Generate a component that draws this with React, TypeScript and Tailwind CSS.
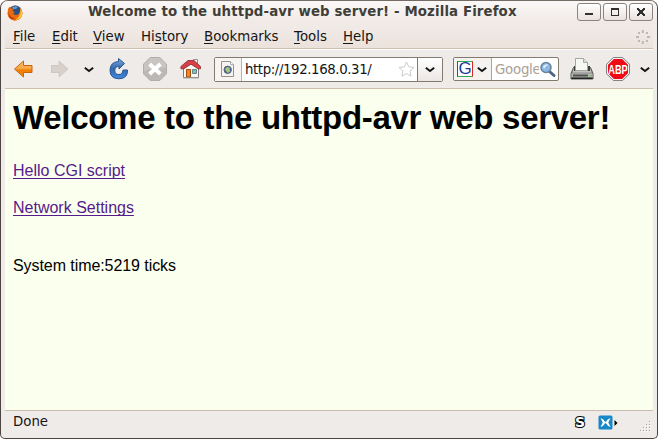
import React from "react";

const ui = "font-['DejaVu_Sans',sans-serif]";

function Chevron({ className = "" }: { className?: string }) {
  return (
    <svg className={"shrink-0 " + className} width="10" height="7" viewBox="0 0 10 7" fill="none">
      <path d="M.8 1.8 5 5 9.2 1.8" stroke="#161616" strokeWidth="2" />
    </svg>
  );
}

function FirefoxLogo() {
  return (
    <svg className="ml-[6px] mt-[4px] shrink-0" width="16" height="16" viewBox="0 0 16 16">
      <circle cx="8" cy="8" r="7.4" fill="#e8630a" />
      <circle cx="8.4" cy="6.4" r="5.8" fill="#284f86" />
      <path d="M5 2.6Q8 0 11 2L9 4 6 4z" fill="#5b9bd2" />
      <path d="M1 4 2.5 1.8 4 3.6 6.5 4 5.6 6 8 7.2 6 8.6Q8 11 11.5 9.2L13.5 5.5 12.7 2.5Q16.4 6 15 10.6 13 15.5 8 15.5 2 15 .6 9.5Z" fill="#e96a10" />
      <path d="M13.3 3.5Q16 7 14.6 10.8 13 14.5 8.5 15 12.5 12 13.4 8z" fill="#ffcf32" />
      <path d="M1.3 7Q3 13 8 13.5 5 15 2.3 12z" fill="#b92b0d" />
    </svg>
  );
}

function WindowButton({ children }: { children: React.ReactNode }) {
  return (
    <div className="h-[18px] w-6 shrink-0 rounded-[3px] border border-[#8c837d] bg-linear-to-b from-[#fff] to-[#e9e2df]">
      <svg width="22" height="16" viewBox="0 0 22 16" shapeRendering="crispEdges">{children}</svg>
    </div>
  );
}

function MenuItem({ before = "", hot, after, className }: { before?: string; hot: string; after: string; className: string }) {
  return (
    <span className={"shrink-0 whitespace-nowrap " + className}>
      {before}
      <span className="underline decoration-1 underline-offset-[2px] [text-decoration-skip-ink:none]">{hot}</span>
      {after}
    </span>
  );
}

function Throbber() {
  return (
    <svg className="ml-auto mr-[2px] mt-[5px]" width="16" height="16" viewBox="0 0 16 16" fill="#bdb8b5">
      <rect x="6.8" y="1" width="2" height="3" />
      <rect x="6.8" y="12" width="2" height="3" />
      <rect x="1" y="7" width="3" height="2" />
      <rect x="12" y="7" width="3" height="2" />
      <rect x="3" y="3" width="2" height="2" />
      <rect x="11" y="3" width="2" height="2" />
      <rect x="3" y="11" width="2" height="2" />
      <rect x="11" y="11" width="2" height="2" />
    </svg>
  );
}

function Arrow({ forward = false }: { forward?: boolean }) {
  return forward ? (
    <svg className="ml-[16px] shrink-0" width="21" height="20" viewBox="0 0 21 20">
      <path d="M1.5 6.5H9V2l9 8-9 8v-4.5H1.5z" fill="#d8d1cb" stroke="#c9c2bd" strokeWidth=".8" />
    </svg>
  ) : (
    <svg className="ml-[8px] shrink-0" width="21" height="20" viewBox="0 0 21 20">
      <defs>
        <linearGradient id="orange" x2="0" y2="1">
          <stop stopColor="#fac27b" /><stop offset=".5" stopColor="#f7a33d" /><stop offset=".55" stopColor="#ef7d00" /><stop offset="1" stopColor="#f68b13" />
        </linearGradient>
      </defs>
      <path d="M19 6.5h-8.5V2L1.5 10l9 8v-4.5H19z" fill="url(#orange)" stroke="#c7650d" />
    </svg>
  );
}

function Reload() {
  return (
    <svg className="ml-[14px] shrink-0" width="22" height="24" viewBox="0 0 22 24">
      <defs>
        <linearGradient id="blue" x2="0" y2="1">
          <stop stopColor="#7daadb" /><stop offset=".5" stopColor="#3268ad" /><stop offset="1" stopColor="#4388dc" />
        </linearGradient>
      </defs>
      <path d="M10.5 1.5 16.5 6.5 11 12V9.2Q6.8 9.6 6.8 13.5 6.8 17.5 11 17.5 14.6 17.5 15 13H19.5Q20 21.5 11 21.8 2 21.5 2 13.5 2 5 10.5 4.5z" fill="url(#blue)" stroke="#285695" strokeLinejoin="round" />
    </svg>
  );
}

function Stop() {
  return (
    <svg className="ml-[13px] shrink-0" width="24" height="24" viewBox="0 0 24 24">
      <path d="M7.2.5h9.6l6.7 6.7v9.6l-6.7 6.7H7.2L.5 16.8V7.2z" fill="#bcb8b6" stroke="#b1adab" />
      <path d="M1 12V7.5L7.5 1h9L23 7.5V11Q13 10 1 14z" fill="#c9c5c3" />
      <path d="m6.6 7 10.8 10M17.4 7 6.6 17" stroke="#fff" strokeWidth="4" />
    </svg>
  );
}

function Home() {
  return (
    <svg className="ml-[13px] shrink-0" width="22" height="22" viewBox="0 0 22 22">
      <path d="M13.5 1.5h4v7h-4z" fill="#f4f4f2" stroke="#90928e" />
      <path d="M3.5 10 11 4.5 18.5 10v9.5h-15z" fill="#f7f7f5" stroke="#7c7d79" />
      <path d="M8 2.5h6L20.5 8.5v2.3h-2.3L11 6.2 3.8 10.8H.9V8.5z" fill="#d74048" stroke="#8f252a" strokeWidth=".8" />
      <path d="M6.5 11.5h4v7.5h-4z" fill="#f48620" stroke="#a34d13" />
      <path d="M12.5 11.5h4v4h-4z" fill="#61c8d7" stroke="#70817e" />
      <path d="M3 20h16" stroke="#a9aaa5" />
    </svg>
  );
}

function SiteIcon() {
  return (
    <svg className="ml-[5px] mt-[3px] shrink-0" width="16" height="17" viewBox="0 0 16 17">
      <path d="M1.5 .5h9l3 3v12h-12z" fill="#f5f4f2" stroke="#92928f" />
      <path d="M10.5 .5v3h3" fill="#fff" stroke="#aaa" />
      <circle cx="7.7" cy="8.8" r="3.7" fill="#3d66ad" stroke="#5b6571" />
      <path d="M5 8 7 6l3 .7L9.5 9l1 1-2.5 2-2-2z" fill="#a9c683" />
    </svg>
  );
}

function AddressBar() {
  return (
    <div className="ml-[12px] flex h-[25px] w-[229px] shrink-0 rounded-[2px] border border-[#82796f] bg-white">
      <div className="w-[27px] border-r border-[#b9b1aa] bg-[#f7f4f2]"><SiteIcon /></div>
      <span className="ml-[3px] w-[153px] whitespace-nowrap pt-[3px] text-[13.33px] leading-[18px] tracking-[-0.4px] text-[#151515]">http://192.168.0.31/</span>
      <svg className="mt-[3px] shrink-0" width="18" height="17" viewBox="0 0 18 17">
        <path d="m8.5 1 2.2 4.8 5.3.6-4 3.6 1.1 5.2-4.6-2.6-4.6 2.6L5 10 1 6.4l5.3-.6z" fill="#fff" stroke="#cacaca" />
      </svg>
      <div className="ml-auto flex w-[25px] justify-center border-l border-[#82796f] bg-linear-to-b from-white to-[#ece6e3] pt-[8px]"><Chevron /></div>
    </div>
  );
}

function SearchBox() {
  return (
    <div className="ml-[10px] flex h-[24px] w-[106px] shrink-0 overflow-hidden rounded-[2px] border border-[#82796f] bg-white">
      <div className="flex w-[38px] shrink-0 border-r border-[#aaa39e] bg-[#f6f2f0]">
        <div className="ml-[3px] mt-[3px] h-4 w-4 shrink-0 border border-t-[#35a853] border-r-[#de2720] border-b-[#35a853] border-l-[#2452b1] bg-white text-center font-['Liberation_Sans',sans-serif] text-[17px] leading-[14px] text-[#173a9b]">G</div>
        <Chevron className="ml-[4px] mt-[8px]" />
      </div>
      <span className="ml-[3px] w-[44px] shrink-0 overflow-hidden whitespace-nowrap pt-[3px] text-[13.33px] leading-[18px] tracking-[-0.25px] text-[#aaa097]">Google</span>
      <svg className="mt-[3px] shrink-0" width="17" height="17" viewBox="0 0 17 17">
        <path d="m10.5 10.5 4.5 4" stroke="#4b6584" strokeWidth="3" strokeLinecap="round" />
        <circle cx="7" cy="6.5" r="5" fill="#8bb9e5" stroke="#6c8297" strokeWidth="1.5" />
        <path d="M4 5.5Q7 2 9.5 4 7 4.5 5 8z" fill="#d8ebf8" />
      </svg>
    </div>
  );
}

function Printer() {
  return (
    <svg className="ml-[11px] shrink-0" width="24" height="24" viewBox="0 0 24 24">
      <path d="M3.5 10.5h17l2.5 6v5.5H1v-5.5z" fill="#888b87" stroke="#555753" />
      <path d="M4 11h16l1.5 4.5h-19z" fill="#c1c3bf" />
      <path d="M4 9h16v5H4z" fill="#3c3f3c" />
      <path d="M5.5 1.5h8l4 4v8h-12z" fill="#f7f7f5" stroke="#a5a6a1" />
      <path d="M13.5 1.5v4h4" fill="#ddd" stroke="#aaa" />
      <path d="M1.5 16.5h21v4h-21z" fill="#b4b7b3" />
      <path d="M3 17.5h15v2H3z" fill="#4d504d" />
      <path d="M1.5 20.5h21V22h-21z" fill="#222522" />
      <path d="M20 18h1.5v1H20z" fill="#5bb531" />
    </svg>
  );
}

function AdblockIcon() {
  return (
    <svg className="ml-[12px] shrink-0" width="24" height="24" viewBox="0 0 24 24">
      <path d="M7.2.6h9.6l6.6 6.6v9.6l-6.6 6.6H7.2L.6 16.8V7.2z" fill="#fff" stroke="#777" />
      <path d="M7.8 2h8.4L22 7.8v8.4L16.2 22H7.8L2 16.2V7.8z" fill="#ed0b16" />
      <text x="12" y="16.6" textAnchor="middle" textLength="19.5" lengthAdjust="spacingAndGlyphs" className="fill-white font-['Liberation_Sans',sans-serif] text-[13px] font-bold">ABP</text>
    </svg>
  );
}

function ResizeGrip() {
  const dots = [[10, 0], [7, 3], [10, 3], [4, 6], [7, 6], [10, 6], [1, 9], [4, 9], [7, 9], [10, 9]];
  return (
    <svg className="ml-auto mr-[2px] mt-[10px] shrink-0" width="12" height="12" viewBox="0 0 12 12" shapeRendering="crispEdges">
      {dots.map(([x, y]) => <g key={`${x}-${y}`}><rect x={x} y={y} width="1" height="1" fill="#aaa09a" /><rect x={x + 1} y={y + 1} width="1" height="1" fill="#fff" /></g>)}
    </svg>
  );
}

export default function App() {
  return (
    <div className={"h-[439px] w-[658px] bg-white text-[#151515] " + ui}>
      <div className="flex h-full flex-col overflow-hidden rounded-t-[8px] rounded-b-[5px] border border-[#4b4440] border-t-[#756b65] bg-[#efebe9]">
        <header className="flex h-[23px] shrink-0 bg-linear-to-b from-[#faf8f7] to-[#f0e9e6]">
          <FirefoxLogo />
          <span className="ml-[65px] mt-[2px] whitespace-nowrap text-[13.33px] font-bold leading-[18px] tracking-[0.12px] text-[#403e39]">Welcome to the uhttpd-avr web server! - Mozilla Firefox</span>
          <div className="ml-auto mr-[4px] mt-[2px] flex gap-[2px]">
            <WindowButton><path d="M7 9h8v2H7z" fill="#33312e" /></WindowButton>
            <WindowButton><path d="M7 4h8v8H7zM8 6h6v5H8z" fillRule="evenodd" fill="#33312e" /></WindowButton>
            <WindowButton><path d="M7 4h2v1h1v1h2V5h1V4h2v2h-1v1h-1v2h1v1h1v2h-2v-1h-1v-1h-2v1H9v1H7v-2h1V9h1V7H8V6H7z" fill="#33312e" /></WindowButton>
          </div>
        </header>
        <nav className="mx-[4px] flex h-[25px] shrink-0 border-b border-[#cdbfae] bg-linear-to-b from-[#f1ebe8] to-[#ece2dc] text-[13.33px] leading-[26px]">
          <MenuItem hot="F" after="ile" className="ml-[8px] w-[39px]" />
          <MenuItem hot="E" after="dit" className="w-[41px]" />
          <MenuItem hot="V" after="iew" className="w-[48px]" />
          <MenuItem before="Hi" hot="s" after="tory" className="w-[63px]" />
          <MenuItem hot="B" after="ookmarks" className="w-[90px]" />
          <MenuItem hot="T" after="ools" className="w-[49px]" />
          <MenuItem hot="H" after="elp" className="w-[40px]" />
          <Throbber />
        </nav>
        <section className="mx-[4px] flex h-[40px] shrink-0 items-center border-t border-b border-t-white border-b-[#cdbfae] bg-[#efebe9]">
          <Arrow />
          <Arrow forward />
          <Chevron className="ml-[13px]" />
          <Reload /><Stop /><Home />
          <AddressBar /><SearchBox />
          <Printer /><AdblockIcon /><Chevron className="ml-[10px]" />
        </section>
        <main className="mx-[4px] min-h-0 flex-1 bg-[#fbffee] pl-[8px] font-['Liberation_Sans',sans-serif] text-[16px] text-black">
          <h1 className="pt-[10px] whitespace-nowrap text-[33px] font-bold leading-[37px] tracking-[-0.3px]">Welcome to the uhttpd-avr web server!</h1>
          <p className="mt-[26px] leading-[18px]"><a className="text-[#551a8b] underline decoration-1 underline-offset-[2px] [text-decoration-skip-ink:none]">Hello CGI script</a></p>
          <p className="mt-[19px] leading-[18px]"><a className="text-[#551a8b] underline decoration-1 underline-offset-[2px] [text-decoration-skip-ink:none]">Network Settings</a></p>
          <p className="mt-[40px] leading-[18px] tracking-[-0.07px]">System time:5219 ticks</p>
        </main>
        <footer className="mx-[4px] flex h-[28px] shrink-0 border-t border-[#c8bdb0] text-[13.33px]">
          <span className="ml-[8px] mt-[1px] w-[560px] shrink-0 leading-[20px]">Done</span>
          <svg className="mt-[2px] shrink-0" width="16" height="18" viewBox="0 0 16 18">
            <text x="2" y="14" className="fill-white stroke-black font-['DejaVu_Sans',sans-serif] text-[14px] font-bold [paint-order:stroke]" strokeWidth="2">S</text>
          </svg>
          <svg className="ml-[9px] mt-[4px] shrink-0" width="21" height="15" viewBox="0 0 21 15">
            <rect x=".5" y=".5" width="14" height="14" rx="1.5" fill="#1687c9" />
            <path d="M2.5 3Q5.8 4 7 6.8H8Q9.2 4 12.5 3L10.3 7.5 12.5 12Q9.2 11 8 8.2H7Q5.8 11 2.5 12L4.7 7.5z" fill="white" />
            <path d="m16.5 5 3 3-3 3z" fill="#000" />
          </svg>
          <ResizeGrip />
        </footer>
      </div>
    </div>
  );
}
